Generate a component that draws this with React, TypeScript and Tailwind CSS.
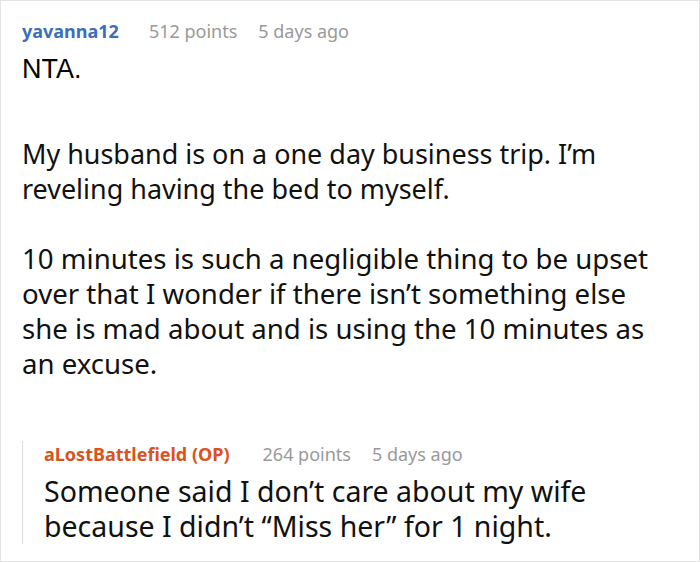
import React from "react";

export default function App() {
  return (
    <div className="w-[700px] h-[562px] bg-white border border-[#e3e3e3] box-border overflow-hidden" style={{ fontFamily: '"Noto Sans", sans-serif' }}>
      <div className="pl-[21px] pt-[17px]">
        <div className="flex items-baseline text-[18px] leading-[26px] whitespace-nowrap">
          <span className="font-bold text-[#3b6fba]">yavanna12</span>
          <span className="ml-[30px] text-[#999999]">512 points</span>
          <span className="ml-[21px] text-[#999999]">5 days ago</span>
        </div>
        <p className="text-[27px] leading-[35px] text-black mt-[8px]" style={{ fontFamily: '"Liberation Sans", sans-serif' }}>NTA.</p>
        <p className="text-[28px] leading-[35px] text-[#111] mt-[49px] whitespace-nowrap origin-left scale-x-[0.962]">
          My husband is on a one day business trip. I’m<br />reveling having the bed to myself.
        </p>
        <p className="text-[27.6px] leading-[35px] text-[#111] mt-[35px] whitespace-nowrap">
          10 minutes is such a negligible thing to be upset<br />over that I wonder if there isn’t something else<br />she is mad about and is using the 10 minutes as<br />an excuse.
        </p>
        <div className="mt-[72px] border-l border-[#dddddd] pl-[21px]">
          <div className="-mt-[12px] flex items-baseline text-[18px] leading-[26px] whitespace-nowrap">
            <span className="font-bold text-[#d9531e]">aLostBattlefield (OP)</span>
            <span className="ml-[33px] text-[#999999]">264 points</span>
            <span className="ml-[21px] text-[#999999]">5 days ago</span>
          </div>
          <p className="text-[28.5px] leading-[35px] text-[#111] mt-[7px] whitespace-nowrap">
            Someone said I don’t care about my wife<br />because I didn’t “Miss her” for 1 night.
          </p>
        </div>
      </div>
    </div>
  );
}
